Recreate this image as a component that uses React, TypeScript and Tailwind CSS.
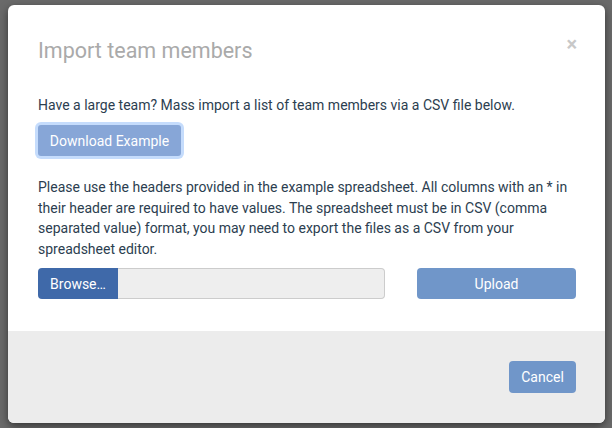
import React from "react";

export default function App() {
  return (
    <div
      className="w-[612px] h-[428px] bg-[#6a6a6a] pt-[5px] pl-[8px] overflow-hidden"
      style={{ fontFamily: "Roboto, 'Noto Sans', Arial, sans-serif" }}
    >
      <div className="w-[597px] h-[418px] rounded-[6px] overflow-hidden bg-white flex flex-col shadow-[0_3px_9px_rgba(0,0,0,0.5)]">
        <div className="flex items-start justify-between pl-[30px] pr-[29px] pt-[32px] h-[60px]">
          <h1 className="text-[21.5px] leading-[28px] text-[#aaaaaa] font-normal">Import team members</h1>
          <button className="text-[#c8c8c8] text-[20px] leading-none font-bold mt-[-3px] mr-[-1px]">×</button>
        </div>
        <div className="flex flex-col pl-[30px] pr-[29px] pt-[30px] pb-[32px] text-[14px] leading-[20px] text-[#2c3e50]">
          <p>Have a large team? Mass import a list of team members via a CSV file below.</p>
          <div className="mt-[10px]">
            <button className="h-[31px] w-[143px] rounded-[3px] bg-[#87a6d7] text-white text-[14px] ring-[3px] ring-[#b6d3fb]/80">
              Download Example
            </button>
          </div>
          <p className="mt-[21px] leading-[20.5px]">
            Please use the headers provided in the example spreadsheet. All columns with an * in their header are required to have values. The spreadsheet must be in CSV (comma separated value) format, you may need to export the files as a CSV from your spreadsheet editor.
          </p>
          <div className="flex items-center mt-[9px]">
            <button className="h-[31px] w-[80px] rounded-l-[4px] bg-[#3f69a9] text-white text-[14px]">Browse…</button>
            <div className="h-[31px] w-[267px] rounded-r-[4px] bg-[#eeeeee] border border-[#cccccc] border-l-0" />
            <button className="ml-[32px] h-[31px] flex-1 rounded-[4px] bg-[#7096c9] text-white text-[14px]">Upload</button>
          </div>
        </div>
        <div className="flex-1 bg-[#ececec] flex justify-end items-start pr-[29px] pt-[30px]">
          <button className="h-[32px] w-[67px] rounded-[4px] bg-[#7096c9] text-white text-[14px]">Cancel</button>
        </div>
      </div>
    </div>
  );
}
